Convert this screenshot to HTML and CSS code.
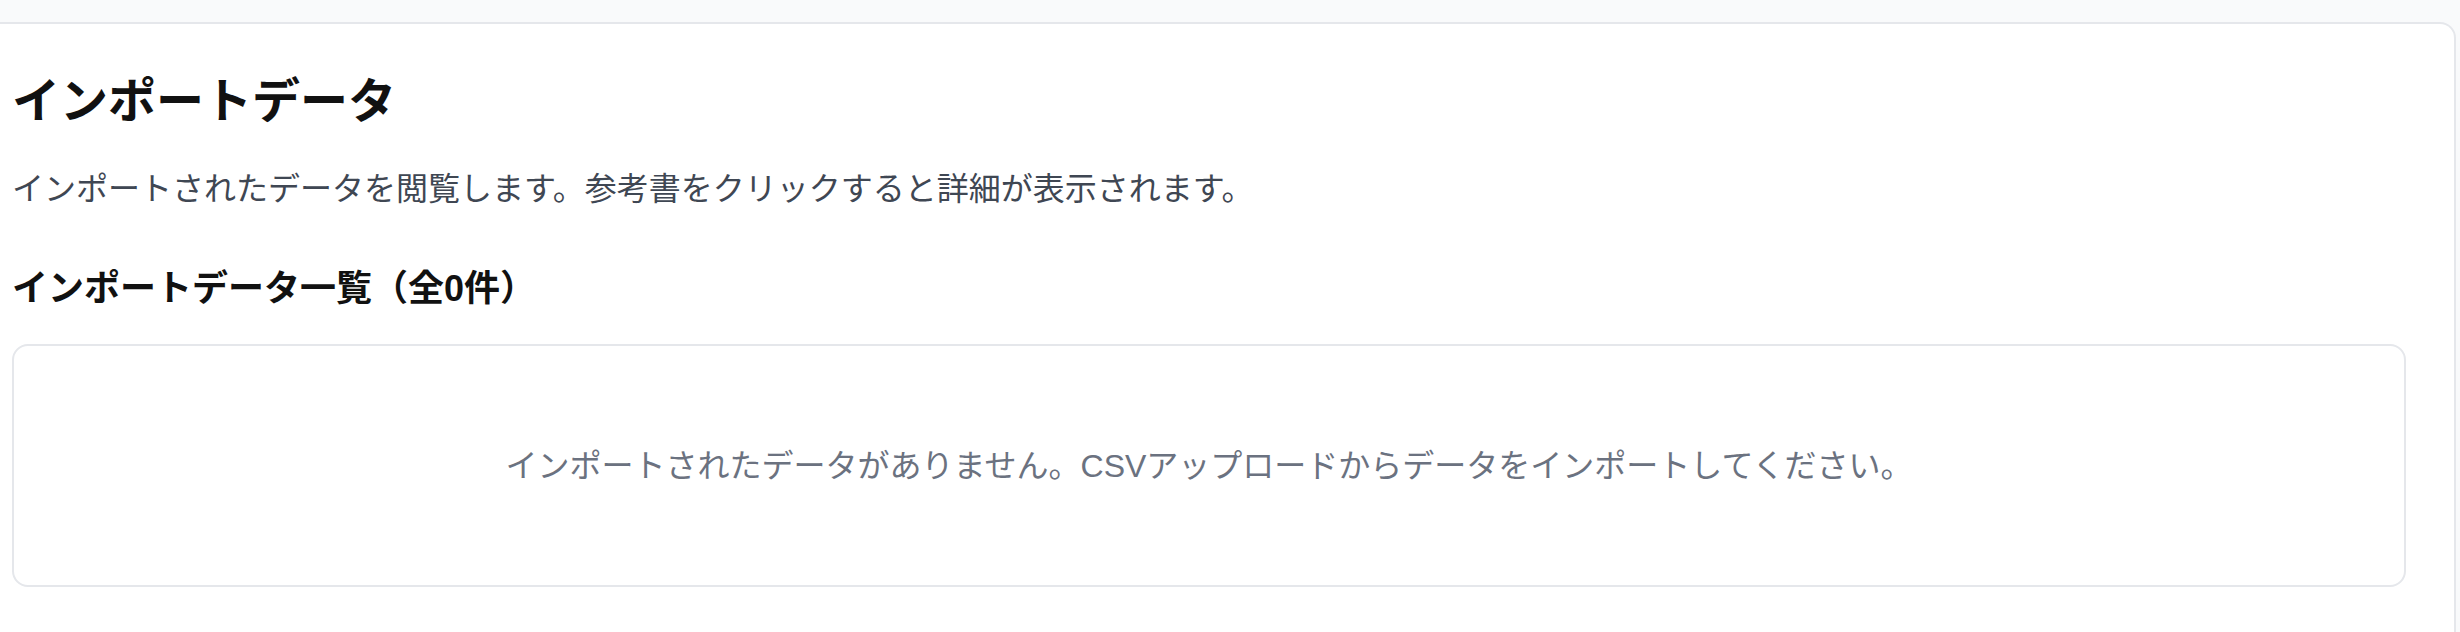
FILE: index.html
```html
<!DOCTYPE html>
<html lang="ja">
<head>
<meta charset="utf-8">
<title>インポートデータ</title>
<link rel="stylesheet" href="styles.css">
</head>
<body>
<div class="page">
  <main class="card">
    <h1 class="title">インポートデータ</h1>
    <p class="desc">インポートされたデータを閲覧します。参考書をクリックすると詳細が表示されます。</p>
    <h2 class="section-title">インポートデータ一覧（全0件）</h2>
    <div class="empty">
      <p class="empty-text">インポートされたデータがありません。CSVアップロードからデータをインポートしてください。</p>
    </div>
  </main>
</div>
</body>
</html>
```
FILE: styles.css
```css
html, body {
  margin: 0;
  padding: 0;
  height: 100%;
  overflow: hidden;
}
body {
  background: #f9fafb;
  font-family: "Liberation Sans", "Noto Sans CJK JP", sans-serif;
}
.page {
  padding: 22px 4px 0 0;
}
.card {
  background: #ffffff;
  border: 2px solid #e5e7eb;
  border-left: none;
  border-radius: 0 16px 16px 0;
  padding: 46px 48px 60px 12px;
}
.title {
  margin: 0;
  font-size: 48px;
  line-height: 64px;
  font-weight: 700;
  color: #111111;
}
.desc {
  margin: 31px 0 0;
  font-size: 32px;
  line-height: 48px;
  color: #3f4753;
}
.section-title {
  margin: 48px 0 0;
  font-size: 36px;
  line-height: 56px;
  font-weight: 700;
  color: #111111;
}
.empty {
  margin-top: 27px;
  border: 2px solid #e5e7eb;
  border-radius: 16px;
  padding: 96px 24px 95px;
  text-align: center;
}
.empty-text {
  margin: 0;
  font-size: 32px;
  line-height: 48px;
  color: #6b7280;
}
```
